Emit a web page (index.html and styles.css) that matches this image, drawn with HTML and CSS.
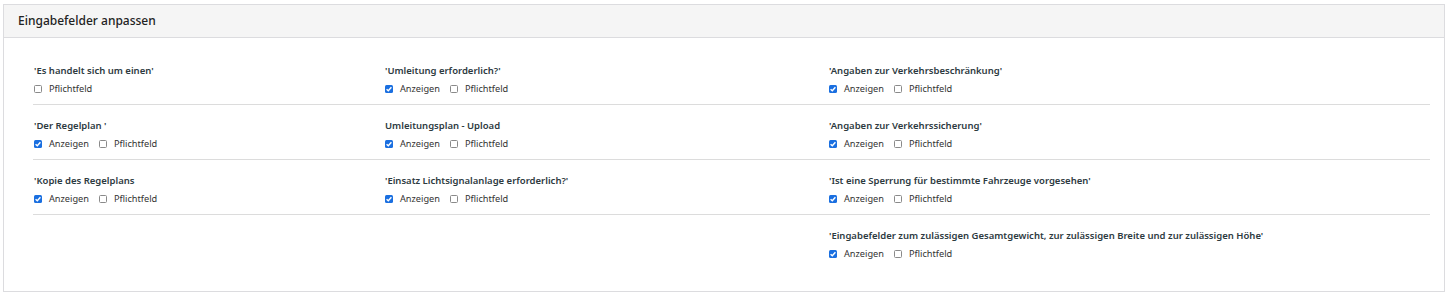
FILE: index.html
```html
<!DOCTYPE html>
<html lang="de">
<head>
<meta charset="utf-8">
<title>Eingabefelder anpassen</title>
<link rel="stylesheet" href="styles.css">
</head>
<body>
<div class="card">
  <div class="card-header">Eingabefelder anpassen</div>
  <div class="card-body">
    <div class="row">
      <div class="field">
        <div class="label">'Es handelt sich um einen'</div>
        <div class="opts">
          <span class="opt"><span class="box"></span>Pflichtfeld</span>
        </div>
      </div>
      <div class="field">
        <div class="label">'Umleitung erforderlich?'</div>
        <div class="opts">
          <span class="opt"><span class="box checked"><svg viewBox="0 0 8 8"><path d="M1.6 4.2 L3.3 5.8 L6.4 2.2"/></svg></span>Anzeigen</span>
          <span class="opt"><span class="box"></span>Pflichtfeld</span>
        </div>
      </div>
      <div class="field">
        <div class="label">'Angaben zur Verkehrsbeschränkung'</div>
        <div class="opts">
          <span class="opt"><span class="box checked"><svg viewBox="0 0 8 8"><path d="M1.6 4.2 L3.3 5.8 L6.4 2.2"/></svg></span>Anzeigen</span>
          <span class="opt"><span class="box"></span>Pflichtfeld</span>
        </div>
      </div>
    </div>
    <div class="row">
      <div class="field">
        <div class="label">'Der Regelplan '</div>
        <div class="opts">
          <span class="opt"><span class="box checked"><svg viewBox="0 0 8 8"><path d="M1.6 4.2 L3.3 5.8 L6.4 2.2"/></svg></span>Anzeigen</span>
          <span class="opt"><span class="box"></span>Pflichtfeld</span>
        </div>
      </div>
      <div class="field">
        <div class="label">Umleitungsplan - Upload</div>
        <div class="opts">
          <span class="opt"><span class="box checked"><svg viewBox="0 0 8 8"><path d="M1.6 4.2 L3.3 5.8 L6.4 2.2"/></svg></span>Anzeigen</span>
          <span class="opt"><span class="box"></span>Pflichtfeld</span>
        </div>
      </div>
      <div class="field">
        <div class="label">'Angaben zur Verkehrssicherung'</div>
        <div class="opts">
          <span class="opt"><span class="box checked"><svg viewBox="0 0 8 8"><path d="M1.6 4.2 L3.3 5.8 L6.4 2.2"/></svg></span>Anzeigen</span>
          <span class="opt"><span class="box"></span>Pflichtfeld</span>
        </div>
      </div>
    </div>
    <div class="row">
      <div class="field">
        <div class="label">'Kopie des Regelplans</div>
        <div class="opts">
          <span class="opt"><span class="box checked"><svg viewBox="0 0 8 8"><path d="M1.6 4.2 L3.3 5.8 L6.4 2.2"/></svg></span>Anzeigen</span>
          <span class="opt"><span class="box"></span>Pflichtfeld</span>
        </div>
      </div>
      <div class="field">
        <div class="label">'Einsatz Lichtsignalanlage erforderlich?'</div>
        <div class="opts">
          <span class="opt"><span class="box checked"><svg viewBox="0 0 8 8"><path d="M1.6 4.2 L3.3 5.8 L6.4 2.2"/></svg></span>Anzeigen</span>
          <span class="opt"><span class="box"></span>Pflichtfeld</span>
        </div>
      </div>
      <div class="field">
        <div class="label">'Ist eine Sperrung für bestimmte Fahrzeuge vorgesehen'</div>
        <div class="opts">
          <span class="opt"><span class="box checked"><svg viewBox="0 0 8 8"><path d="M1.6 4.2 L3.3 5.8 L6.4 2.2"/></svg></span>Anzeigen</span>
          <span class="opt"><span class="box"></span>Pflichtfeld</span>
        </div>
      </div>
    </div>
    <div class="row last">
      <div class="field"></div>
      <div class="field"></div>
      <div class="field">
        <div class="label">'Eingabefelder zum zulässigen Gesamtgewicht, zur zulässigen Breite und zur zulässigen Höhe'</div>
        <div class="opts">
          <span class="opt"><span class="box checked"><svg viewBox="0 0 8 8"><path d="M1.6 4.2 L3.3 5.8 L6.4 2.2"/></svg></span>Anzeigen</span>
          <span class="opt"><span class="box"></span>Pflichtfeld</span>
        </div>
      </div>
    </div>
  </div>
</div>
</body>
</html>
```
FILE: styles.css
```css
html, body {
  margin: 0;
  background: #ffffff;
}
body {
  padding: 4px 3px 0 3px;
  font-family: "Noto Sans", "Open Sans", sans-serif;
  color: #2f3a40;
}
.card {
  width: 1440px;
  border: 1px solid #dcdcdf;
  background: #fff;
}
.card-header {
  height: 32px;
  line-height: 32px;
  padding-left: 14px;
  background: #f5f5f5;
  border-bottom: 1px solid #dcdcdf;
  font-size: 12px;
  font-weight: 500;
  color: #222;
}
.card-body {
  padding: 12px 14px 22px 29px;
}
.row {
  display: grid;
  grid-template-columns: 351px 444px 1fr;
  padding: 14px 0 9px 0;
  border-bottom: 1px solid #dcdcdc;
}
.row.last {
  border-bottom: none;
}
.label {
  height: 13px;
  line-height: 13px;
  font-size: 9.5px;
  font-weight: 600;
  color: #2d3a3f;
  padding-left: 1px;
  white-space: nowrap;
}
.opts {
  margin-top: 5px;
  height: 13px;
  display: flex;
  align-items: center;
  gap: 10px;
  padding-left: 1px;
}
.opt {
  display: flex;
  align-items: center;
  gap: 7px;
  font-size: 9.2px;
  line-height: 13px;
  color: #333;
}
.box {
  width: 6px;
  height: 6px;
  border: 1px solid #8a8a8a;
  border-radius: 1.5px;
  background: #fff;
  display: inline-flex;
}
.box.checked {
  width: 8px;
  height: 8px;
  border: none;
  background: #1a6fe0;
}
.box svg {
  width: 8px;
  height: 8px;
}
.box svg path {
  fill: none;
  stroke: #fff;
  stroke-width: 1.4;
}
```
